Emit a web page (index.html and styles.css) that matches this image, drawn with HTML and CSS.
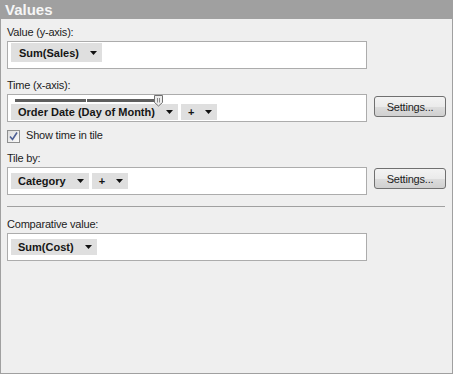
FILE: index.html
```html
<!DOCTYPE html>
<html lang="en">
<head>
    <meta charset="UTF-8">
    <title>Values</title>
    <link rel="stylesheet" href="styles.css">
</head>
<body>
<div class="panel">
    <div class="title">Values</div>
    <div class="content">
        <div class="label">Value (y-axis):</div>
        <div class="row">
            <div class="field field-first">
                <span class="pill pill-tall">Sum(Sales)<svg class="arrow" width="7" height="4" viewBox="0 0 7 4"><path d="M0 0H7L3.5 4Z"/></svg></span>
            </div>
        </div>

        <div class="label label-gap">Time (x-axis):</div>
        <div class="row">
            <div class="field field-time">
                <div class="slider">
                    <div class="track"></div>
                    <div class="notch"></div>
                    <svg class="thumb" width="9" height="12" viewBox="0 0 9 12">
                        <path d="M0.5 0.5H8.5V7.5L4.5 11L0.5 7.5Z" fill="#ececec" stroke="#707070"/>
                        <path d="M3.5 3V7.5M5.5 3V7.5" stroke="#8a8a8a"/>
                    </svg>
                </div>
                <div class="pills">
                    <span class="pill">Order Date (Day of Month)<svg class="arrow" width="7" height="4" viewBox="0 0 7 4"><path d="M0 0H7L3.5 4Z"/></svg></span>
                    <span class="pill">+<svg class="arrow" width="7" height="4" viewBox="0 0 7 4"><path d="M0 0H7L3.5 4Z"/></svg></span>
                </div>
            </div>
            <button class="settings settings-time">Settings...</button>
        </div>

        <div class="check-row">
            <span class="checkbox">
                <svg width="11" height="11" viewBox="0 0 11 11"><path d="M2 5.5L4.5 8.5L9 1.5" fill="none" stroke="#4d5f95" stroke-width="1.6"/></svg>
            </span>
            Show time in tile
        </div>

        <div class="label label-tile">Tile by:</div>
        <div class="row">
            <div class="field">
                <span class="pill">Category<svg class="arrow" width="7" height="4" viewBox="0 0 7 4"><path d="M0 0H7L3.5 4Z"/></svg></span>
                <span class="pill">+<svg class="arrow" width="7" height="4" viewBox="0 0 7 4"><path d="M0 0H7L3.5 4Z"/></svg></span>
            </div>
            <button class="settings settings-tile">Settings...</button>
        </div>

        <div class="separator"></div>

        <div class="label label-comp">Comparative value:</div>
        <div class="row">
            <div class="field">
                <span class="pill">Sum(Cost)<svg class="arrow" width="7" height="4" viewBox="0 0 7 4"><path d="M0 0H7L3.5 4Z"/></svg></span>
            </div>
        </div>
    </div>
</div>
</body>
</html>
```

FILE: styles.css
```css
* {
    margin: 0;
    padding: 0;
    box-sizing: border-box;
}

body {
    font-family: "Liberation Sans", Arial, sans-serif;
    font-size: 11px;
    color: #1c1c1c;
    background: #ffffff;
}

.panel {
    width: 453px;
    height: 374px;
    background: #efefef;
    border: 1px solid #a0a0a0;
    border-top: none;
}

.title {
    height: 19px;
    margin: 0 -1px;
    padding-left: 5px;
    background: #a0a0a0;
    color: #f6f6f6;
    font-size: 15px;
    font-weight: bold;
    line-height: 19px;
}

.content {
    padding: 6px 6px 0 6px;
}

.label {
    height: 14px;
    line-height: 14px;
    margin-bottom: 2px;
    letter-spacing: -0.2px;
}

.label-gap {
    margin-top: 9px;
}

.label-tile {
    margin-top: 8px;
}

.label-comp {
    margin-top: 10px;
}

.row {
    display: flex;
    align-items: flex-start;
    gap: 7px;
}

.field {
    width: 360px;
    height: 28px;
    background: #ffffff;
    border: 1px solid #acacac;
    padding: 5px 3px 0;
    display: flex;
    align-items: flex-start;
    gap: 3px;
}

.field-first {
    padding-top: 1px;
}

.field-time {
    flex-direction: column;
    padding-top: 0;
    gap: 0;
}

.pills {
    display: flex;
    gap: 3px;
}

.pill {
    display: inline-flex;
    align-items: center;
    height: 16px;
    padding: 0 5px 0 7px;
    gap: 11px;
    background: #dfdfdf;
    font-weight: bold;
    color: #151515;
}

.pill-tall {
    height: 19px;
    padding-left: 8px;
}

.arrow {
    fill: #111111;
}

.slider {
    position: relative;
    width: 160px;
    height: 9px;
}

.track {
    position: absolute;
    left: 4px;
    top: 4px;
    width: 144px;
    height: 3px;
    background: #5f5f5f;
}

.notch {
    position: absolute;
    left: 75px;
    top: 4px;
    width: 1px;
    height: 3px;
    background: #ffffff;
}

.thumb {
    position: absolute;
    left: 143px;
    top: 0;
}

.settings {
    width: 72px;
    height: 21px;
    border: 1px solid #707070;
    border-radius: 3px;
    background: linear-gradient(#f3f3f3, #ebebeb 50%, #dddddd 50%, #d0d0d0);
    font-family: "Liberation Sans", Arial, sans-serif;
    font-size: 11px;
    letter-spacing: -0.2px;
    color: #1c1c1c;
}

.settings-time {
    margin-top: 2px;
}

.settings-tile {
    margin-top: 1px;
}

.check-row {
    display: flex;
    align-items: flex-start;
    gap: 6px;
    height: 16px;
    margin-top: 5px;
    line-height: 16px;
    letter-spacing: -0.2px;
}

.checkbox {
    width: 13px;
    height: 13px;
    margin-top: 3px;
    border: 1px solid #8e8f8f;
    background: linear-gradient(135deg, #dcdcdc, #fbfbfb);
    display: flex;
    align-items: center;
    justify-content: center;
}

.separator {
    height: 1px;
    margin-top: 11px;
    margin-right: 1px;
    background: #a0a0a0;
}
```
